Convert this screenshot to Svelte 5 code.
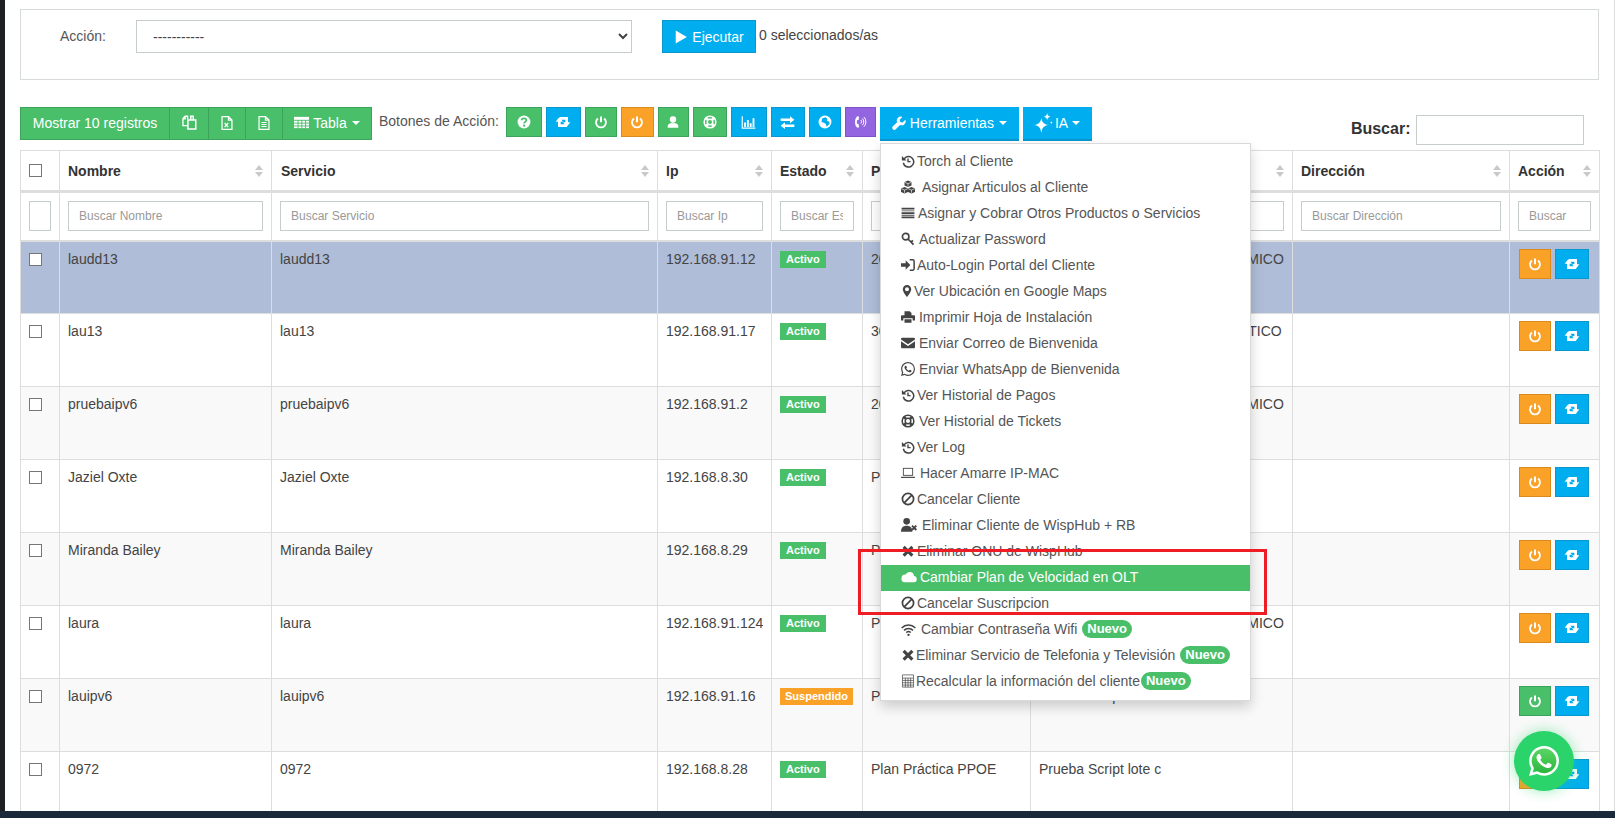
<script>
	const s = (d, w = 2.6) => `<path d="${d}" fill="none" stroke="currentColor" stroke-width="${w}"/>`;

	// hand drawn icons, 24x24 box unless noted
	const icons = {
		history: s('M5 9a9 9 0 1 1-1 6') + '<path d="M1.5 3.5 9.5 11h-8z"/>' + s('M12 7.5V13h4.5', 2.4),
		cubes: '<path d="M12 1l6 2.4v6.2L12 12 6 9.6V3.4zM6 12l6 2.4v6.2L6 23 0 20.6v-6.2zM18 12l6 2.4v6.2L18 23l-6-2.4v-6.2z"/><path d="M6.5 4 12 6.3 17.5 4M12 6.3V11M.5 15 6 17.3 11.5 15M6 17.3V22M12.5 15l5.5 2.3 5.5-2.3M18 17.3V22" fill="none" stroke="#fff" stroke-width="1.1"/>',
		tasks: '<path d="M1 3h22v3H1zM1 7.5h22v1.6H1zM1 10.6h22v3H1zM1 15h22v1.6H1zM1 18.2h22v3H1z"/>',
		key: '<circle cx="8" cy="8" r="5.6" fill="none" stroke="currentColor" stroke-width="2.8"/>' + s('M12 12l9.5 9.5M17 17l3.5-2.5', 3),
		signin: '<path d="M0 9h8V4l8 8-8 8v-5H0z"/>' + s('M15 3h5a2.5 2.5 0 0 1 2.5 2.5v13A2.5 2.5 0 0 1 20 21h-5', 2.6),
		pin: '<path fill-rule="evenodd" d="M12 0a8.5 8.5 0 0 0-8.5 8.5C3.5 14 12 24 12 24s8.5-10 8.5-15.5A8.5 8.5 0 0 0 12 0zm0 12.5a4 4 0 1 1 0-8 4 4 0 0 1 0 8z"/>',
		print: '<path d="M6 2h9l3 3v4H6zM0 10.5A1.5 1.5 0 0 1 1.5 9h21a1.5 1.5 0 0 1 1.5 1.5V18h-4v-4H4v4H0zM6 16h12v6H6z"/>',
		mail: '<path d="M0 5a2 2 0 0 1 2-2h20a2 2 0 0 1 2 2v1.2L12 14 0 6.2zM0 9l12 8 12-8v10a2 2 0 0 1-2 2H2a2 2 0 0 1-2-2z"/>',
		whatsapp: '<path d="M17.472 14.382c-.297-.149-1.758-.867-2.03-.967-.273-.099-.471-.148-.67.15-.197.297-.767.966-.94 1.164-.173.199-.347.223-.644.075-.297-.15-1.255-.463-2.39-1.475-.883-.788-1.48-1.761-1.653-2.059-.173-.297-.018-.458.13-.606.134-.133.298-.347.446-.52.149-.174.198-.298.298-.497.099-.198.05-.371-.025-.52-.075-.149-.669-1.612-.916-2.207-.242-.579-.487-.5-.669-.51-.173-.008-.371-.01-.57-.01-.198 0-.52.074-.792.372-.272.297-1.04 1.016-1.04 2.479 0 1.462 1.065 2.875 1.213 3.074.149.198 2.096 3.2 5.077 4.487.709.306 1.262.489 1.694.625.712.227 1.36.195 1.871.118.571-.085 1.758-.719 2.006-1.413.248-.694.248-1.289.173-1.413-.074-.124-.272-.198-.57-.347m-5.421 7.403h-.004a9.87 9.87 0 01-5.031-1.378l-.361-.214-3.741.982.998-3.648-.235-.374a9.86 9.86 0 01-1.51-5.26c.001-5.45 4.436-9.884 9.888-9.884 2.64 0 5.122 1.03 6.988 2.898a9.825 9.825 0 012.893 6.994c-.003 5.45-4.437 9.884-9.885 9.884m8.413-18.297A11.815 11.815 0 0012.05 0C5.495 0 .16 5.335.157 11.892c0 2.096.547 4.142 1.588 5.945L.057 24l6.305-1.654a11.882 11.882 0 005.683 1.448h.005c6.554 0 11.89-5.335 11.893-11.893a11.821 11.821 0 00-3.48-8.413z"/>',
		ring: '<circle cx="12" cy="12" r="10" fill="none" stroke="currentColor" stroke-width="2.6"/><circle cx="12" cy="12" r="4.8" fill="none" stroke="currentColor" stroke-width="2.6"/>' + s('M4.5 4.5l4 4M19.5 4.5l-4 4M4.5 19.5l4-4M19.5 19.5l-4-4', 4.4),
		laptop: '<rect x="4" y="4" width="16" height="12" fill="none" stroke="currentColor" stroke-width="1.5"/>' + s('M0 19.5h24', 2),
		ban: '<circle cx="12" cy="12" r="9.6" fill="none" stroke="currentColor" stroke-width="3"/>' + s('M5.5 18.5 18.5 5.5', 3),
		usertimes: '<circle cx="8.5" cy="6.5" r="5"/><path d="M0 22c0-6 3-9 8.5-9s8.5 3 8.5 9z"/>' + s('M16.5 13l6.5 6.5M23 13l-6.5 6.5', 2.8),
		times: s('M4.5 5l15 15M19.5 5l-15 15', 5.4),
		cloud: '<path d="M19.5 10.5A6.5 6.5 0 0 0 7 8.4 5.8 5.8 0 0 0 6 20h13.5a4.8 4.8 0 0 0 0-9.5z"/>',
		wifi: s('M1 9.5a15.5 15.5 0 0 1 22 0', 2.4) + s('M4.8 13.4a10 10 0 0 1 14.4 0', 2.4) + s('M8.5 17a5 5 0 0 1 7 0', 2.4) + '<circle cx="12" cy="20.5" r="1.9"/>',
		calc: s('M2.5 1.5h19v21h-19zM2.5 7h19M2.5 11h19M2.5 15h19M2.5 19h19M7.5 7v15.5M12 7v15.5M16.5 7v15.5', 1.2),
		question: '<circle cx="12" cy="12" r="11"/><path d="M8 9.2c0-2.4 1.8-3.6 4-3.6s4 1.2 4 3.3c0 2.8-3.8 3-3.8 5.5" fill="none" stroke-width="3" style="stroke:var(--c)"/><circle cx="12.2" cy="18.3" r="1.9" style="fill:var(--c)"/>',
		retweet: '<path d="M6 4.500h13.500v8H23L17.500 19.500 12 12.500h3.500V8.500H9.500zM1 11.500 6.500 4.500l5.500 7H8.500v4h6.500l3.500 4H4.500v-8z"/>',
		power: s('M12 2.500v10', 3.4) + s('M6.800 6a8.500 8.500 0 1 0 10.400 0', 3.2),
		user: '<path d="M12 2a5.500 5.500 0 0 0-5.500 5.800c0 3 2 5.700 5.500 5.700s5.500-2.700 5.500-5.700A5.500 5.500 0 0 0 12 2zM3 22v-3.500c0-2.800 3-4 6-5 1.200 1 4.800 1 6 0 3 1 6 2.200 6 5V22z"/>',
		chart: s('M2 2v19h21', 1.8) + '<path d="M5 12h3v7H5zM9.500 8h3v11h-3zM14 13h3v6h-3zM18.500 5h3v14h-3z"/>',
		exchange: '<path d="M1 5.500h15V2l7 5.500L16 13V9.500H1zM23 15H8v-3.500L1 17l7 5.500V19h15z"/>',
		globe: '<circle cx="12" cy="12" r="11"/><path d="M7 6l6-2 3 3-1 3 4 1 1 4-5 5-2-5-4-2-3-1z" style="fill:var(--c)"/>',
		phone: '<path d="M8 2C5 3.500 3.500 7 3.500 12S5 20.500 8 22l2.500-1-1-5.500-2.500-.500c-.6-1.800-.6-4.200 0-6l2.500-.5 1-5.500z"/>' + s('M13.500 8.500a4.500 4.500 0 0 1 0 6M16 6a8 8 0 0 1 0 11.500M18.800 3.500a12 12 0 0 1 0 16.500', 1.7),
		wrench: '<path d="M23 6.500l-4.800 4.800-4-1-1.200-4L17.800 1.500A7 7 0 0 0 8.700 10.500L1.500 17.700a3.500 3.500 0 0 0 5 5l7.200-7.300a7 7 0 0 0 9.300-8.900z"/>',
		sparkles: '<path d="M10 6c.8 5.200 3 7.500 8.500 8.500-5.500 1-7.700 3.300-8.500 9.500-.8-6.200-3-8.500-8.500-9.500C7 13.500 9.200 11.200 10 6zM17 0c.4 2.800 1.500 4 4 4.400-2.500.4-3.600 1.600-4 4.400-.4-2.800-1.500-4-4-4.400 2.500-.4 3.600-1.600 4-4.400zM22 9.500c.2 1.300.7 1.800 2 2-1.300.2-1.800.7-2 2-.2-1.300-.7-1.800-2-2 1.300-.2 1.800-.7 2-2z"/>',
		copy: s('M9 7V2H5L1.500 5.500V17H9M5 2v4H1.500', 2.1) + s('M9.500 8h12.500v14.500H9.500zM14 8V2h4v6', 2.400),
		excel: s('M3.500 1h11l6 6v16h-17zM14.500 1v6h6', 2.100) + s('M8 12l6 7M14 12l-6 7', 2.200),
		file: s('M3.500 1h11l6 6v16h-17zM14.500 1v6h6', 2.100) + s('M7.500 11h9M7.500 14.500h9M7.500 18h9', 1.800),
		table: '<path d="M0 3h24v18H0z"/>' + '<path d="M0 8.500h24M0 13h24M0 17.500h24M6.500 8v13M12.500 8v13M18.500 8v13" fill="none" style="stroke:var(--c)" stroke-width="1.500"/>',
		play: '<path d="M3 1l19 11L3 23z"/>'
	};

	const topButtons = [
		{ icon: 'question', tone: 'green', w: 36 },
		{ icon: 'retweet', tone: 'blue', w: 35, size: 16 },
		{ icon: 'power', tone: 'green', w: 32 },
		{ icon: 'power', tone: 'orange', w: 33 },
		{ icon: 'user', tone: 'green', w: 31 },
		{ icon: 'ring', tone: 'green', w: 34 },
		{ icon: 'chart', tone: 'blue', w: 36, size: 15 },
		{ icon: 'exchange', tone: 'blue', w: 34, size: 15 },
		{ icon: 'globe', tone: 'blue', w: 32 },
		{ icon: 'phone', tone: 'purple', w: 31 }
	];

	// off = distance from the icon's left edge to the label
	const menuItems = [
		{ icon: 'history', label: 'Torch al Cliente', off: 16 },
		{ icon: 'cubes', label: 'Asignar Articulos al Cliente', off: 21 },
		{ icon: 'tasks', label: 'Asignar y Cobrar Otros Productos o Servicios', off: 17 },
		{ icon: 'key', label: 'Actualizar Password', off: 18 },
		{ icon: 'signin', label: 'Auto-Login Portal del Cliente', off: 16 },
		{ icon: 'pin', label: 'Ver Ubicación en Google Maps', off: 13, size: 12 },
		{ icon: 'print', label: 'Imprimir Hoja de Instalación', off: 18 },
		{ icon: 'mail', label: 'Enviar Correo de Bienvenida', off: 18 },
		{ icon: 'whatsapp', label: 'Enviar WhatsApp de Bienvenida', off: 18 },
		{ icon: 'history', label: 'Ver Historial de Pagos', off: 16 },
		{ icon: 'ring', label: 'Ver Historial de Tickets', off: 18 },
		{ icon: 'history', label: 'Ver Log', off: 16 },
		{ icon: 'laptop', label: 'Hacer Amarre IP-MAC', off: 19 },
		{ icon: 'ban', label: 'Cancelar Cliente', off: 16 },
		{ icon: 'usertimes', label: 'Eliminar Cliente de WispHub + RB', off: 21, size: 16 },
		{ icon: 'times', label: 'Eliminar ONU de WispHub', off: 16 },
		{ icon: 'cloud', label: 'Cambiar Plan de Velocidad en OLT', off: 19, size: 16, active: true },
		{ icon: 'ban', label: 'Cancelar Suscripcion', off: 16 },
		{ icon: 'wifi', label: 'Cambiar Contraseña Wifi', off: 20, size: 15, isNew: true },
		{ icon: 'times', label: 'Eliminar Servicio de Telefonia y Televisión', off: 15, isNew: true },
		{ icon: 'calc', label: 'Recalcular la información del cliente', off: 15, isNew: true, tight: true }
	];

	const columns = [39, 212, 386, 114, 91, 168, 262, 217, 90];

	const rows = [
		{ name: 'laudd13', ip: '192.168.91.12', state: 'Activo', plan: '20 Megas', zone: 'PLAN INTERNET PPPOE - DINAMICO', selected: true },
		{ name: 'lau13', ip: '192.168.91.17', state: 'Activo', plan: '30 Megas', zone: 'PLAN INTERNET PPPOE - ESTATICO' },
		{ name: 'pruebaipv6', ip: '192.168.91.2', state: 'Activo', plan: '20 Megas', zone: 'PLAN INTERNET PPPOE - DINAMICO' },
		{ name: 'Jaziel Oxte', ip: '192.168.8.30', state: 'Activo', plan: 'Plan Práctica PPOE', zone: 'Prueba Script lote c' },
		{ name: 'Miranda Bailey', ip: '192.168.8.29', state: 'Activo', plan: 'Plan Práctica PPOE', zone: 'Prueba Script lote c' },
		{ name: 'laura', ip: '192.168.91.124', state: 'Activo', plan: 'Plan Práctica', zone: 'PLAN INTERNET PPPOE - DINAMICO' },
		{ name: 'lauipv6', ip: '192.168.91.16', state: 'Suspendido', plan: 'PLAN PRUEBA PPOE', zone: 'Prueba Script lote c' },
		{ name: '0972', ip: '192.168.8.28', state: 'Activo', plan: 'Plan Práctica PPOE', zone: 'Prueba Script lote c' }
	];
</script>

{#snippet icon(name, size = 14)}
	<svg class="icon" viewBox="0 0 24 24" width={size} height={size} fill="currentColor">{@html icons[name]}</svg>
{/snippet}

{#snippet sort()}
	<span class="sort"></span>
{/snippet}

<div class="page">
	<section class="panel">
		<label class="action-label" for="accion">Acción:</label>
		<select id="accion" class="action-select">
			<option>-----------</option>
		</select>
		<button class="btn blue run">{@render icon('play', 14)} Ejecutar</button>
		<span class="selected-count">0 seleccionados/as</span>
	</section>

	<div class="toolbar">
		<div class="group">
			<button class="btn green show">Mostrar 10 registros</button>
			<button class="btn green square a">{@render icon('copy', 15)}</button>
			<button class="btn green square b">{@render icon('excel', 14)}</button>
			<button class="btn green square b">{@render icon('file', 14)}</button>
			<button class="btn green tabla">{@render icon('table', 15)} Tabla <span class="caret"></span></button>
		</div>
		<span class="tool-label">Botones de Acción:</span>
		<div class="tool-buttons">
			{#each topButtons as b}
				<button class="btn tool {b.tone}" style="width:{b.w}px">{@render icon(b.icon, b.size ?? 14)}</button>
			{/each}
		</div>
		<div class="menu-wrap">
			<button class="btn blue drop herr">{@render icon('wrench', 14)} Herramientas <span class="caret"></span></button>
			<ul class="menu">
				{#each menuItems as item}
					<li class:active={item.active}>
						<span class="menu-icon" style="width:{item.off}px">{@render icon(item.icon, item.size ?? 14)}</span>
						<span>{item.label}</span>
						{#if item.isNew}<span class="pill" class:tight={item.tight}>Nuevo</span>{/if}
					</li>
				{/each}
			</ul>
		</div>
		<button class="btn blue drop ia">{@render icon('sparkles', 20)} IA <span class="caret"></span></button>
		<label class="search"><span class="search-text">Buscar:</span> <input type="text" /></label>
	</div>

	<table>
		<colgroup>
			{#each columns as w}<col style="width:{w}px" />{/each}
		</colgroup>
		<thead>
			<tr class="heads">
				<th><input type="checkbox" class="check" /></th>
				<th>Nombre{@render sort()}</th>
				<th class="nudge">Servicio{@render sort()}</th>
				<th>Ip{@render sort()}</th>
				<th>Estado{@render sort()}</th>
				<th>Plan{@render sort()}</th>
				<th>Zona{@render sort()}</th>
				<th>Dirección{@render sort()}</th>
				<th>Acción{@render sort()}</th>
			</tr>
			<tr class="filters">
				<th><input class="filter" /></th>
				<th><input class="filter" placeholder="Buscar Nombre" /></th>
				<th><input class="filter" placeholder="Buscar Servicio" /></th>
				<th><input class="filter" placeholder="Buscar Ip" /></th>
				<th><input class="filter" placeholder="Buscar Estado" /></th>
				<th><input class="filter" placeholder="Buscar Plan" /></th>
				<th><input class="filter" placeholder="Buscar Zona" /></th>
				<th><input class="filter" placeholder="Buscar Dirección" /></th>
				<th><input class="filter" placeholder="Buscar" /></th>
			</tr>
		</thead>
		<tbody>
			{#each rows as row}
				<tr class:selected={row.selected}>
					<td><input type="checkbox" class="check" /></td>
					<td>{row.name}</td>
					<td>{row.name}</td>
					<td>{row.ip}</td>
					<td><span class="badge" class:suspended={row.state === 'Suspendido'}>{row.state}</span></td>
					<td>{row.plan}</td>
					<td>{row.zone}</td>
					<td></td>
					<td class="row-actions">
						<button class="btn row-btn {row.state === 'Suspendido' ? 'green' : 'orange'}">{@render icon('power', 14)}</button>
						<button class="btn row-btn blue wide">{@render icon('retweet', 16)}</button>
					</td>
				</tr>
			{/each}
		</tbody>
	</table>

	<div class="callout"></div>

	<div class="whatsapp">
		<svg viewBox="0 0 24 24" width="30" height="30" fill="#fff">
			<defs>
				<linearGradient id="wa-fill" x1="0" y1="0" x2="0" y2="1">
					<stop offset="0" stop-color="#5dd667" />
					<stop offset="1" stop-color="#27b53c" />
				</linearGradient>
			</defs>
			<circle cx="12" cy="12" r="10.5" fill="url(#wa-fill)" />
			{@html icons.whatsapp}
		</svg>
	</div>
</div>

<style>
	:global(body) {
		background: #1a2a3a;
		overflow: hidden;
	}

	.page {
		position: relative;
		box-sizing: border-box;
		height: 811px;
		padding: 9px 0 0 15px;
		overflow: hidden;
		background: #fff;
		border-left: 5px solid #1d1f23;
		border-right: 1px solid #ddd;
		font-family: 'Liberation Sans', Arial, sans-serif;
		font-size: 14px;
		color: #444;
	}

	.panel {
		box-sizing: border-box;
		display: flex;
		align-items: flex-start;
		width: 1579px;
		height: 71px;
		padding-top: 10px;
		border: 1px solid #d6dad9;
	}

	.action-label {
		width: 76px;
		margin-left: 39px;
		line-height: 32px;
		color: #555;
	}

	.action-select {
		box-sizing: border-box;
		width: 496px;
		height: 33px;
		padding: 0 12px;
		background: #fff;
		border: 1px solid #c6cdcc;
		border-radius: 0;
		font: inherit;
		color: #444;
	}

	.btn {
		display: inline-flex;
		align-items: center;
		justify-content: center;
		gap: 4px;
		box-sizing: border-box;
		padding: 0;
		border: 1px solid;
		border-radius: 0;
		background: var(--c);
		border-color: var(--edge);
		color: #fff;
		font: inherit;
	}

	.green { --c: #4abf6a; --edge: #3ba35a; }
	.blue { --c: #00aeef; --edge: #0a97cd; }
	.orange { --c: #f9a227; --edge: #d88a1d; }
	.purple { --c: #9365e0; --edge: #8052c9; }

	.run {
		width: 94px;
		height: 33px;
		margin-left: 30px;
	}

	.selected-count {
		margin-left: 3px;
		line-height: 31px;
	}

	.toolbar {
		display: flex;
		align-items: flex-start;
		margin-top: 27px;
		height: 43px;
	}

	.group {
		display: flex;
		height: 33px;
	}

	.group .btn {
		padding-bottom: 2px;
	}

	.group .btn + .btn {
		border-left-color: #3ba35a;
		margin-left: -1px;
	}

	.show { width: 150px; }
	.square.a { width: 40px; }
	.square.b { width: 38px; }
	.tabla { width: 90px; }

	.tool-label {
		margin-left: 7px;
		line-height: 28px;
		color: #555;
		white-space: nowrap;
	}

	.tool-buttons {
		display: flex;
		gap: 4px;
		margin-left: 7px;
	}

	.tool {
		height: 30px;
	}

	.menu-wrap {
		position: relative;
		margin-left: 4px;
	}

	.drop {
		height: 34px;
		border-width: 0 0 2px;
	}

	.herr { width: 139px; }

	.ia {
		width: 69px;
		margin-left: 4px;
		padding-left: 10px;
		justify-content: flex-start;
		gap: 2px;
	}

	.ia .caret {
		margin-left: 2px;
	}

	.caret {
		width: 0;
		height: 0;
		margin-left: 1px;
		border-top: 4px solid #fff;
		border-left: 4px solid transparent;
		border-right: 4px solid transparent;
	}

	.menu {
		position: absolute;
		z-index: 5;
		top: 36px;
		left: 0;
		box-sizing: border-box;
		width: 371px;
		margin: 0;
		padding: 5px 0;
		list-style: none;
		background: #fff;
		border: 1px solid rgba(0, 0, 0, 0.15);
		box-shadow: 0 6px 12px rgba(0, 0, 0, 0.175);
		color: #555;
	}

	.menu li {
		display: flex;
		align-items: center;
		box-sizing: border-box;
		height: 26px;
		padding: 0 0 2px 20px;
		white-space: nowrap;
	}

	.menu li.active {
		background: #4abf6a;
		color: #fff;
	}

	.menu-icon {
		display: flex;
		flex: none;
		color: #444;
	}

	.active .menu-icon {
		color: #fff;
	}

	.icon {
		flex: none;
	}

	.pill {
		margin-left: 5px;
		padding: 0 5px;
		border-radius: 9px;
		background: #4abf6a;
		color: #fff;
		font-size: 13px;
		font-weight: bold;
		line-height: 18px;
	}

	.pill.tight {
		margin-left: 1px;
	}

	.search {
		margin-left: 259px;
		margin-top: 8px;
		display: flex;
		align-items: center;
		gap: 6px;
		font-size: 16px;
		font-weight: bold;
		color: #333;
		white-space: nowrap;
	}

	.search-text {
		padding-bottom: 2px;
	}

	.search input {
		box-sizing: border-box;
		width: 168px;
		height: 30px;
		border: 1px solid #c6cdcc;
	}

	table {
		table-layout: fixed;
		width: 1579px;
		border-collapse: collapse;
	}

	th, td {
		box-sizing: border-box;
		border: 1px solid #ddd;
		text-align: left;
		white-space: nowrap;
		overflow: hidden;
	}

	.heads th {
		position: relative;
		height: 41px;
		padding: 0 8px;
		border-bottom: 3px solid #ddd;
		font-size: 14px;
		color: #333;
	}

	.heads th.nudge {
		padding-left: 9px;
	}

	.filters th {
		height: 49px;
		padding: 0 8px;
		border-bottom: 2px solid #ddd;
		font-weight: normal;
	}

	.sort {
		position: absolute;
		right: 8px;
		top: 50%;
		width: 8px;
		height: 12px;
		margin-top: -6px;
	}

	.sort::before, .sort::after {
		content: '';
		position: absolute;
		left: 0;
		border-left: 4px solid transparent;
		border-right: 4px solid transparent;
	}

	.sort::before {
		top: 0;
		border-bottom: 5px solid #c9c9c9;
	}

	.sort::after {
		bottom: 0;
		border-top: 5px solid #c9c9c9;
	}

	.check {
		appearance: none;
		display: block;
		box-sizing: border-box;
		width: 13px;
		height: 13px;
		margin: 0;
		background: #fff;
		border: 1px solid #767676;
	}

	.filter {
		display: block;
		box-sizing: border-box;
		width: 100%;
		height: 30px;
		padding: 0 10px;
		background: #fff;
		border: 1px solid #c6cdcc;
		font: 12px 'Liberation Sans', Arial, sans-serif;
		color: #555;
	}

	.filter::placeholder {
		color: #999;
	}

	tbody td {
		height: 73px;
		padding: 7px 8px;
		vertical-align: top;
		line-height: 20px;
	}

	tbody tr:nth-child(odd) td {
		background: #f9f9f9;
	}

	tbody tr.selected td {
		background: #afbdd8;
	}

	tbody .check {
		margin-top: 4px;
	}

	.badge {
		display: inline-block;
		padding: 0 6px;
		background: #4abf6a;
		color: #fff;
		font-size: 11px;
		font-weight: bold;
		line-height: 17px;
		vertical-align: top;
		margin-top: 2px;
	}

	.badge.suspended {
		padding: 0 5px;
		background: #f9a227;
	}

	tbody td.row-actions {
		padding: 7px 0 0 9px;
	}

	.row-btn {
		width: 32px;
		height: 30px;
		vertical-align: top;
	}

	.row-btn.wide {
		width: 34px;
	}

	.callout {
		position: absolute;
		z-index: 6;
		left: 853px;
		top: 549px;
		box-sizing: border-box;
		width: 409px;
		height: 66px;
		border: 3px solid #ee1c25;
	}

	.whatsapp {
		position: absolute;
		z-index: 7;
		left: 1509px;
		top: 731px;
		display: flex;
		align-items: center;
		justify-content: center;
		width: 60px;
		height: 60px;
		border-radius: 50%;
		background: #2bd46b;
		box-shadow: 0 0 14px rgba(43, 212, 107, 0.45);
	}
</style>
